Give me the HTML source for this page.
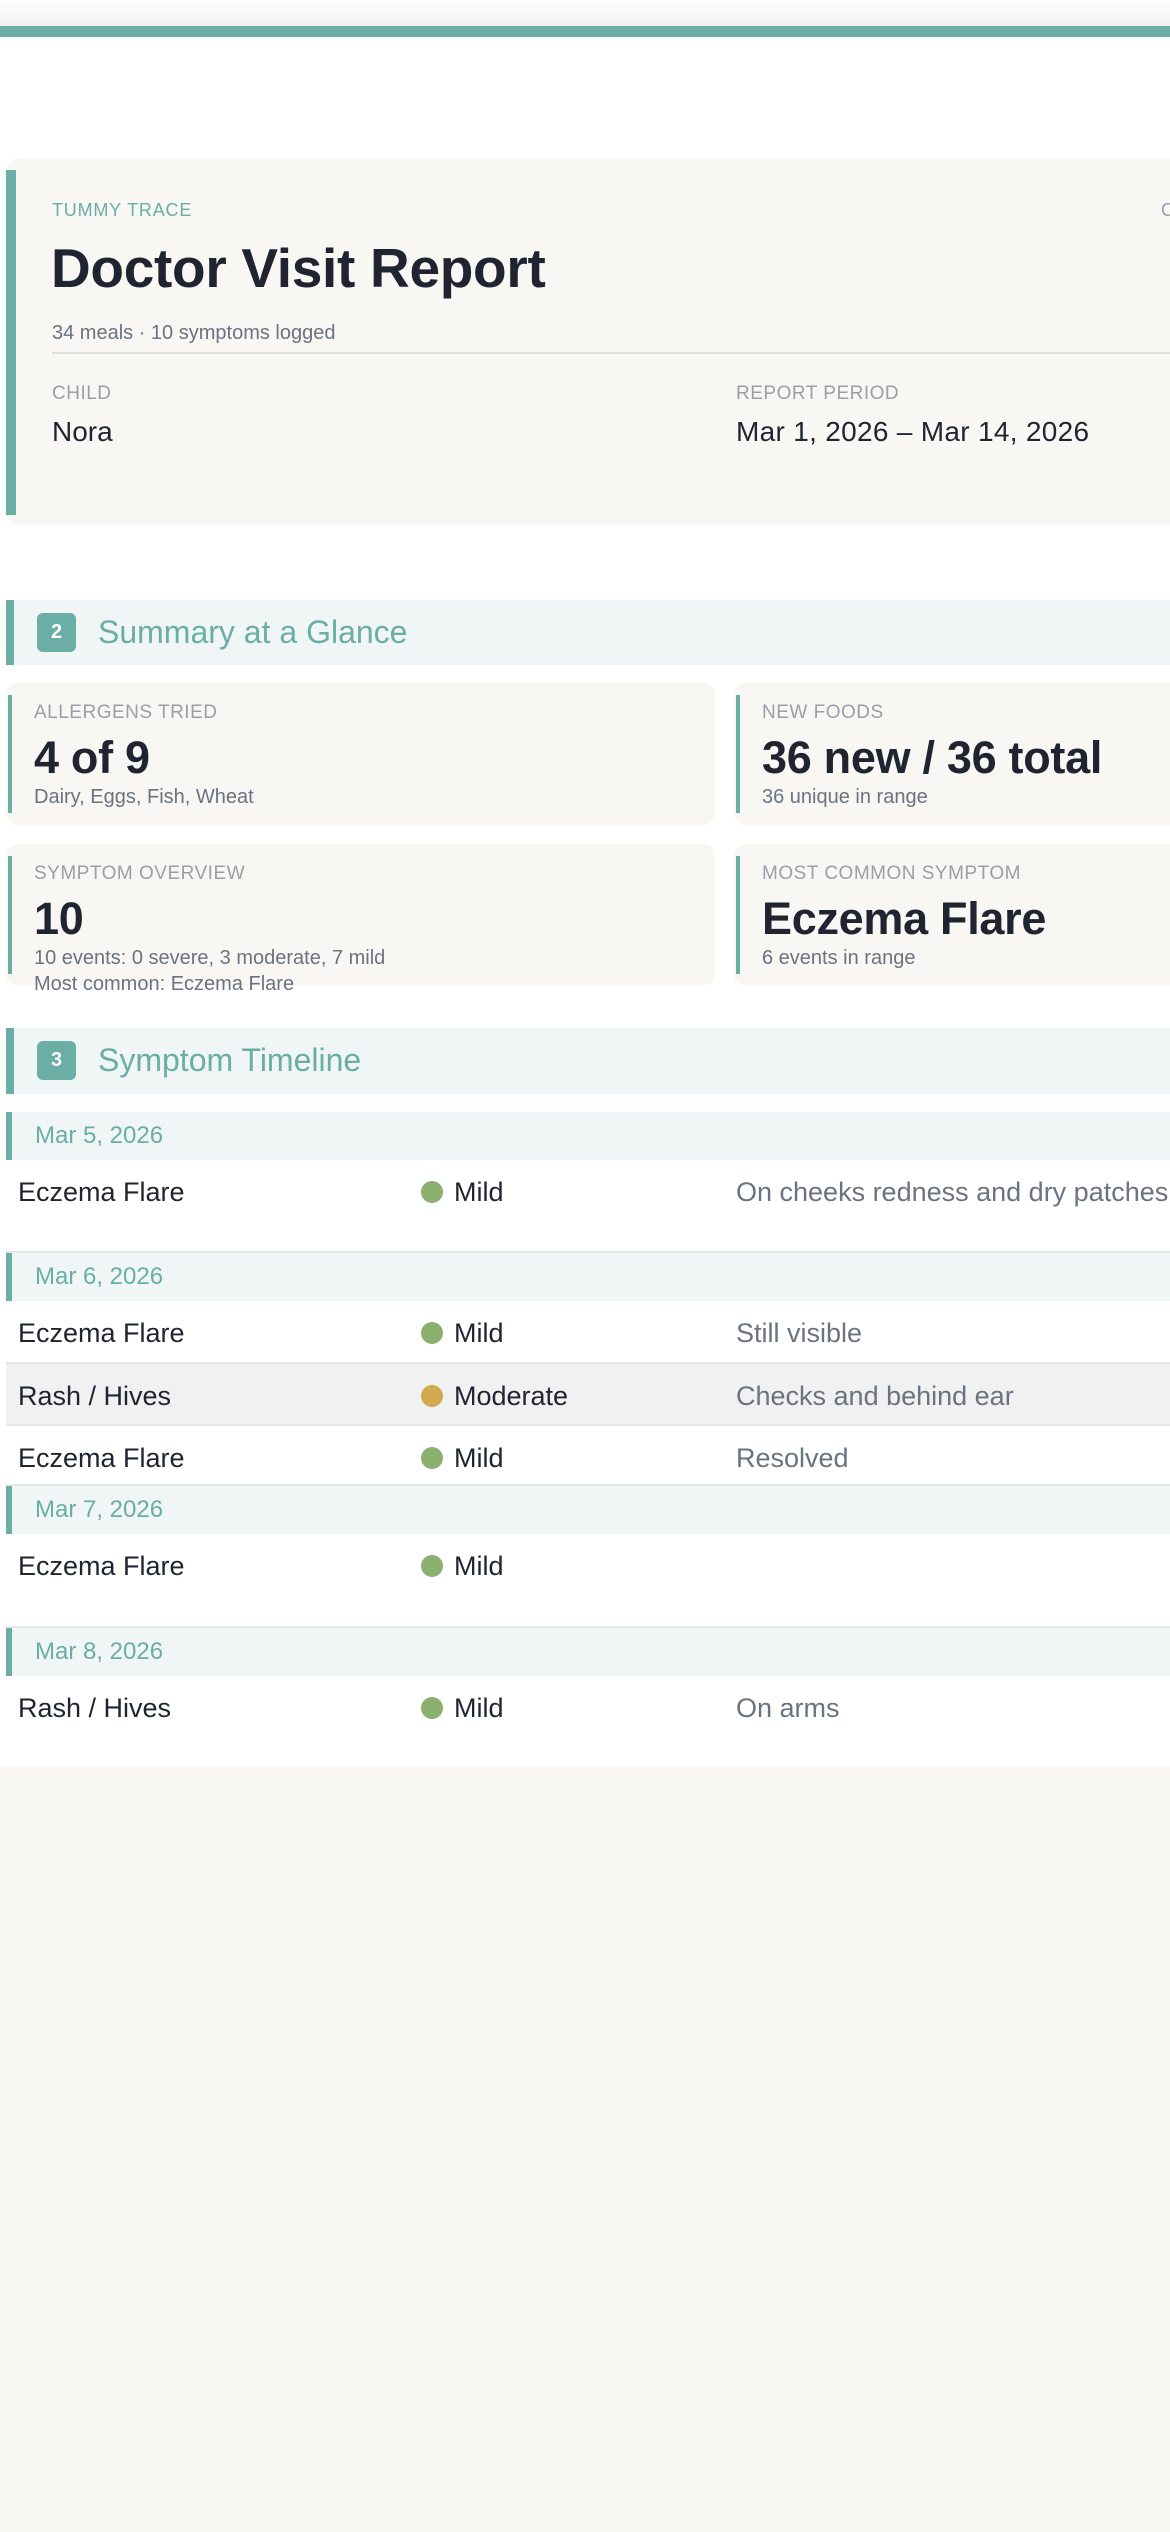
<!DOCTYPE html>
<html><head><meta charset="utf-8"><style>
*{margin:0;padding:0;box-sizing:border-box}
html,body{width:1170px;height:2532px;overflow:hidden;background:#f8f7f4;font-family:"Liberation Sans",sans-serif}
.a{position:absolute;white-space:nowrap}
#white{position:absolute;left:0;top:0;width:1170px;height:1767px;background:#fff}
.topg{position:absolute;left:0;top:0;width:1170px;height:26px;background:linear-gradient(#fff,#f0f0f0)}
.teal{position:absolute;left:0;top:26px;width:1170px;height:11px;background:#6aaea6}
.card{position:absolute;background:#f8f7f4;border-radius:14px}
.band{position:absolute;left:6px;width:1164px;background:#f0f6f5;border-left:8px solid #6aaea6}
.badge{position:absolute;left:23px;width:39px;height:39px;background:#6aaea6;border-radius:6px;color:#fff;font-size:20px;font-weight:bold;text-align:center;line-height:39px}
.btitle{position:absolute;left:84px;font-size:32px;color:#6aaea6;font-weight:500}
.sc{position:absolute;background:#f8f7f4;border-radius:12px}
.sc .bl{position:absolute;left:2px;top:12px;bottom:12px;width:4px;background:#6aaea6}
.lbl{position:absolute;left:28px;font-size:19px;color:#9a9ea8;letter-spacing:.5px}
.val{position:absolute;left:28px;font-size:45px;font-weight:bold;color:#1f2430;letter-spacing:-.3px}
.sub{position:absolute;left:28px;font-size:20px;color:#6b7280}
.date{position:absolute;left:6px;width:1164px;height:48px;background:#f0f6f5;border-left:6px solid #6aaea6;color:#6aaea6;font-size:24px;line-height:48px;padding-left:23px;font-weight:500}
.row{position:absolute;left:6px;width:1164px;border-bottom:2px solid #e6e6e6;font-size:27px;color:#1f2430}
.row span{position:absolute;top:2px;line-height:61px}
.n1{left:12px}.d{left:415px;top:21px!important;width:22px;height:22px;border-radius:50%}
.s{left:448px}.t{left:730px;color:#6b7280}
.g{background:#8aaf6e}.y{background:#d1a84f}
</style></head><body>
<div id="white"></div>
<div class="topg"></div><div class="teal"></div>

<div class="card" style="left:6px;top:158px;width:1200px;height:367px"></div>
<div class="a" style="left:6px;top:170px;width:10px;height:345px;background:#6aaea6"></div>
<div class="a" style="left:52px;top:200px;font-size:18px;color:#6aaea6;letter-spacing:.8px">TUMMY TRACE</div>
<div class="a" style="left:1161px;top:200px;font-size:18px;color:#9a9ea8">C</div>
<div class="a" style="left:51px;top:236px;font-size:55px;font-weight:bold;color:#1f2430;letter-spacing:-.3px">Doctor Visit Report</div>
<div class="a" style="left:52px;top:322px;font-size:20px;color:#6b7280">34 meals · 10 symptoms logged</div>
<div class="a" style="left:52px;top:352px;width:1118px;height:2px;background:#e0dfdc"></div>
<div class="a" style="left:52px;top:383px;font-size:19px;color:#9a9ea8;letter-spacing:.5px">CHILD</div>
<div class="a" style="left:736px;top:383px;font-size:19px;color:#9a9ea8;letter-spacing:.5px">REPORT PERIOD</div>
<div class="a" style="left:52px;top:416px;font-size:28px;color:#1f2430">Nora</div>
<div class="a" style="left:736px;top:416px;font-size:28px;color:#1f2430;letter-spacing:.3px">Mar 1, 2026 – Mar 14, 2026</div>

<div class="band" style="top:600px;height:65px"><div class="badge" style="top:13px">2</div><div class="btitle" style="top:14px">Summary at a Glance</div></div>

<div class="sc" style="left:6px;top:683px;width:709px;height:142px"><div class="bl"></div>
<div class="lbl" style="top:19px">ALLERGENS TRIED</div><div class="val" style="top:49px">4 of 9</div><div class="sub" style="top:103px">Dairy, Eggs, Fish, Wheat</div></div>
<div class="sc" style="left:734px;top:683px;width:500px;height:142px"><div class="bl"></div>
<div class="lbl" style="top:19px">NEW FOODS</div><div class="val" style="top:49px">36 new / 36 total</div><div class="sub" style="top:103px">36 unique in range</div></div>
<div class="sc" style="left:6px;top:844px;width:709px;height:142px"><div class="bl"></div>
<div class="lbl" style="top:19px">SYMPTOM OVERVIEW</div><div class="val" style="top:49px">10</div><div class="sub" style="top:103px">10 events: 0 severe, 3 moderate, 7 mild</div><div class="sub" style="top:129px">Most common: Eczema Flare</div></div>
<div class="sc" style="left:734px;top:844px;width:500px;height:142px"><div class="bl"></div>
<div class="lbl" style="top:19px">MOST COMMON SYMPTOM</div><div class="val" style="top:49px">Eczema Flare</div><div class="sub" style="top:103px">6 events in range</div></div>

<div class="band" style="top:1028px;height:66px"><div class="badge" style="top:13px">3</div><div class="btitle" style="top:14px">Symptom Timeline</div></div>

<div class="date" style="top:1112px">Mar 5, 2026</div>
<div class="row" style="top:1160px;height:93px"><span class="n1">Eczema Flare</span><span class="d g"></span><span class="s">Mild</span><span class="t">On cheeks redness and dry patches</span></div>
<div class="date" style="top:1253px">Mar 6, 2026</div>
<div class="row" style="top:1301px;height:63px"><span class="n1">Eczema Flare</span><span class="d g"></span><span class="s">Mild</span><span class="t">Still visible</span></div>
<div class="row" style="top:1364px;height:62px;background:#f1f1f1"><span class="n1">Rash / Hives</span><span class="d y"></span><span class="s">Moderate</span><span class="t">Checks and behind ear</span></div>
<div class="row" style="top:1426px;height:60px"><span class="n1">Eczema Flare</span><span class="d g"></span><span class="s">Mild</span><span class="t">Resolved</span></div>
<div class="date" style="top:1486px">Mar 7, 2026</div>
<div class="row" style="top:1534px;height:94px"><span class="n1">Eczema Flare</span><span class="d g"></span><span class="s">Mild</span></div>
<div class="date" style="top:1628px">Mar 8, 2026</div>
<div class="row" style="top:1676px;height:91px;border-bottom:none"><span class="n1">Rash / Hives</span><span class="d g"></span><span class="s">Mild</span><span class="t">On arms</span></div>
</body></html>
